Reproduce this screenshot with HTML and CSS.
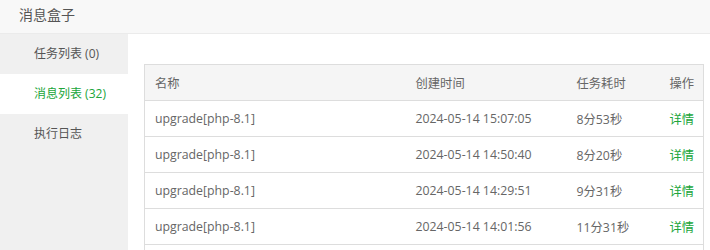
FILE: index.html
```html
<!DOCTYPE html>
<html lang="zh-CN">
<head>
<meta charset="utf-8">
<title>消息盒子</title>
<link rel="stylesheet" href="styles.css">
</head>
<body>
<div class="box">
  <div class="box-title">消息盒子</div>
  <div class="box-body">
    <ul class="side">
      <li class="side-item">任务列表 (0)</li>
      <li class="side-item active">消息列表 (32)</li>
      <li class="side-item">执行日志</li>
    </ul>
    <div class="main">
      <table class="tbl">
        <colgroup>
          <col class="c1"><col class="c2"><col class="c3"><col class="c4">
        </colgroup>
        <thead>
          <tr><th>名称</th><th>创建时间</th><th>任务耗时</th><th>操作</th></tr>
        </thead>
        <tbody>
          <tr><td>upgrade[php-8.1]</td><td>2024-05-14 15:07:05</td><td>8分53秒</td><td><a class="link">详情</a></td></tr>
          <tr><td>upgrade[php-8.1]</td><td>2024-05-14 14:50:40</td><td>8分20秒</td><td><a class="link">详情</a></td></tr>
          <tr><td>upgrade[php-8.1]</td><td>2024-05-14 14:29:51</td><td>9分31秒</td><td><a class="link">详情</a></td></tr>
          <tr><td>upgrade[php-8.1]</td><td>2024-05-14 14:01:56</td><td>11分31秒</td><td><a class="link">详情</a></td></tr>
          <tr class="tail"><td></td><td></td><td></td><td></td></tr>
        </tbody>
      </table>
    </div>
  </div>
</div>
</body>
</html>
```
FILE: styles.css
```css
html, body {
  margin: 0;
  padding: 0;
  background: #fff;
}
body {
  font-family: "Open Sans", "Noto Sans CJK SC", sans-serif;
  font-size: 12.3px;
  color: #666;
  overflow: hidden;
  height: 250px;
}
.box-title {
  height: 34px;
  line-height: 30px;
  padding-left: 19px;
  font-size: 14px;
  color: #555;
  background: #f8f8f8;
  border-bottom: 1px solid #ebebeb;
  box-sizing: border-box;
}
.box-body {
  display: flex;
  height: 216px;
}
.side {
  list-style: none;
  margin: 0;
  padding: 0;
  width: 128px;
  flex: none;
  background: #f0f0f0;
}
.side-item {
  height: 40px;
  line-height: 40px;
  padding-left: 34px;
  font-size: 12px;
  color: #555;
}
.side-item.active {
  background: #fff;
  color: #20a53a;
}
.main {
  flex: 1;
  padding: 30px 7px 0 16px;
}
.tbl {
  width: 559px;
  border-collapse: collapse;
  table-layout: fixed;
  border: 1px solid #ddd;
}
.c1 { width: 261px; }
.c2 { width: 161px; }
.c3 { width: 93px; }
.c4 { width: 44px; }
.tbl th,
.tbl td {
  height: 36px;
  padding: 0 0 0 10px;
  text-align: left;
  font-weight: normal;
  color: #666;
  border-bottom: 1px solid #ddd;
  white-space: nowrap;
  box-sizing: border-box;
}
.tbl th {
  background: #f5f5f5;
}
.link {
  color: #20a53a;
  text-decoration: none;
}
```
